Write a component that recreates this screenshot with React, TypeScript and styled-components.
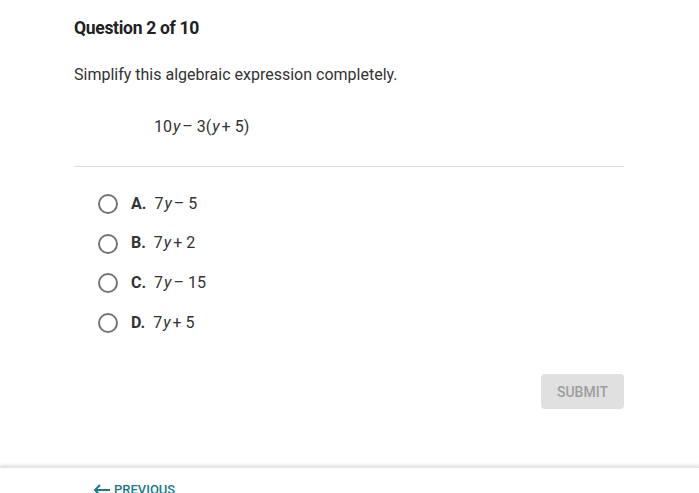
import React from "react";
import styled, { createGlobalStyle } from "styled-components";

const Global = createGlobalStyle`
  html, body { margin: 0; padding: 0; background: #fff; }
  body { font-family: Roboto, "Noto Sans", Arial, sans-serif; color: #212121; overflow: hidden; }
`;

const Page = styled.div`
  height: 493px;
  display: flex;
  flex-direction: column;
`;

const Main = styled.main`
  flex: 1;
  padding: 0 75px 0 74px;
  display: flex;
  flex-direction: column;
`;

const Title = styled.h1`
  margin: 18px 0 0;
  font-size: 17.5px;
  font-weight: 700;
  line-height: 20px;
  letter-spacing: -0.3px;
`;

const Prompt = styled.p`
  margin: 27px 0 0;
  font-size: 16px;
  line-height: 20px;
  color: #333;
`;

const Expr = styled.div`
  margin: 32px 0 0 80px;
  font-size: 16px;
  line-height: 20px;
  color: #333;
`;

const V = styled.i`
  font-style: italic;
  margin: 0 2px 0 1px;
`;

const Divider = styled.hr`
  margin: 29px 0 0;
  border: 0;
  border-top: 1px solid #ddd;
`;

const Options = styled.div`
  margin: 27px 0 0 24px;
  display: flex;
  flex-direction: column;
  gap: 19.7px;
`;

const Option = styled.label`
  display: flex;
  align-items: center;
  height: 20px;
  font-size: 16px;
  color: #333;
`;

const Radio = styled.span`
  width: 16px;
  height: 16px;
  border: 2px solid #757575;
  border-radius: 50%;
  margin-right: 13px;
  flex: none;
`;

const Letter = styled.b`
  font-weight: 700;
  margin-right: 8px;
  margin-top: -2px;
`;

const Answer = styled.span`
  margin-top: -2px;
`;

const Actions = styled.div`
  margin-top: 41px;
  display: flex;
  justify-content: flex-end;
`;

const Submit = styled.button`
  width: 83px;
  height: 35px;
  border: 0;
  border-radius: 4px;
  background: #e0e0e0;
  color: #9e9e9e;
  font-family: Roboto, sans-serif;
  font-size: 14px;
  font-weight: 500;
  padding: 0;
`;

const Footer = styled.footer`
  height: 25px;
  box-shadow: 0 -2px 3px rgba(0, 0, 0, 0.12);
  border-top: 1px solid #e6e6e6;
  padding-left: 93px;
  display: flex;
  align-items: flex-start;
`;

const Prev = styled.span`
  display: flex;
  align-items: center;
  gap: 3px;
  margin-top: 14px;
  color: #1a7a8a;
  font-size: 13px;
  font-weight: 500;
  line-height: 15px;
  white-space: nowrap;
`;

const Arrow = () => (
  <svg width="18" height="12" viewBox="0 0 18 12">
    <path d="M17 6H2M7 1L2 6l5 5" stroke="#1a7a8a" strokeWidth="2" fill="none" />
  </svg>
);

const options = [
  { l: "A.", op: "–", n: "5" },
  { l: "B.", op: "+", n: "2" },
  { l: "C.", op: "–", n: "15" },
  { l: "D.", op: "+", n: "5" },
];

export default function App() {
  return (
    <Page>
      <Global />
      <Main>
        <Title>Question 2 of 10</Title>
        <Prompt>Simplify this algebraic expression completely.</Prompt>
        <Expr>
          10<V>y</V>– 3(<V>y</V>+ 5)
        </Expr>
        <Divider />
        <Options>
          {options.map((o) => (
            <Option key={o.l}>
              <Radio />
              <Letter>{o.l}</Letter>
              <Answer>
                7<V>y</V>{o.op} {o.n}
              </Answer>
            </Option>
          ))}
        </Options>
        <Actions>
          <Submit>SUBMIT</Submit>
        </Actions>
      </Main>
      <Footer>
        <Prev>
          <Arrow />
          PREVIOUS
        </Prev>
      </Footer>
    </Page>
  );
}
